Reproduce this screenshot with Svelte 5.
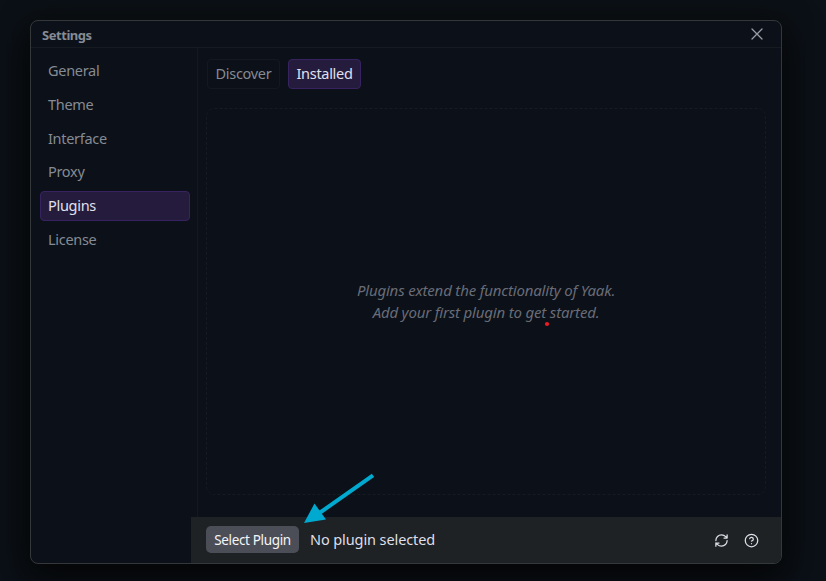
<script>
  const sections = ['General', 'Theme', 'Interface', 'Proxy', 'Plugins', 'License'];
  const tabs = ['Discover', 'Installed'];
  let section = $state('Plugins');
  let tab = $state('Installed');
</script>

<main>
  <div class="dialog">
    <header>
      <h1>Settings</h1>
      <button class="close" aria-label="Close">
        <svg width="12" height="12" viewBox="0 0 12 12"><path d="M1 1l10 10M11 1L1 11" /></svg>
      </button>
    </header>
    <div class="body">
      <nav>
        {#each sections as item}
          <button class:active={section === item} onclick={() => (section = item)}><span>{item}</span></button>
        {/each}
      </nav>
      <section>
        <div class="tabs">
          {#each tabs as item}
            <button class:active={tab === item} onclick={() => (tab = item)}><span>{item}</span></button>
          {/each}
        </div>
        <div class="empty">
          <svg class="dash" width="560" height="387"><rect x=".5" y=".5" width="559" height="386" rx="8" /></svg>
          <p>Plugins extend the functionality of Yaak.</p>
          <p>Add your first plugin to get started.</p>
        </div>
      </section>
    </div>
    <footer>
      <button class="select">Select Plugin</button>
      <span class="status">No plugin selected</span>
      <div class="icons">
        <svg width="15" height="15" viewBox="0 0 24 24">
          <path d="M3 12a9 9 0 0 1 9-9 9.75 9.75 0 0 1 6.74 2.74L21 8M21 3v5h-5M21 12a9 9 0 0 1-9 9 9.75 9.75 0 0 1-6.74-2.74L3 16M8 16H3v5" />
        </svg>
        <svg width="15" height="15" viewBox="0 0 24 24">
          <circle cx="12" cy="12" r="10" />
          <path d="M9.09 9a3 3 0 0 1 5.83 1c0 2-3 3-3 3M12 17h.01" />
        </svg>
      </div>
    </footer>
  </div>
  <svg class="marks" width="826" height="581" viewBox="0 0 826 581">
    <path d="M373 475.3L318 514" stroke="#00a9cf" stroke-width="4" />
    <path d="M304 523L314.5 503.5L326 519.5Z" fill="#00a9cf" />
    <circle cx="547" cy="324" r="2.1" fill="#ed1c24" />
  </svg>
</main>

<style>
  :global(body) {
    background: #0c1118;
  }
  main {
    position: relative;
    box-sizing: border-box;
    width: 826px;
    height: 581px;
    padding: 20px 0 0 30px;
    overflow: hidden;
    background: #0c1118;
    font-family: "Noto Sans", "Open Sans", sans-serif;
    font-size: 14.5px;
    letter-spacing: -0.3px;
    color: #858b94;
  }
  .dialog {
    box-sizing: border-box;
    display: flex;
    flex-direction: column;
    width: 752px;
    height: 544px;
    border: 1px solid #35383b;
    border-radius: 8px;
    background: #0c1018;
    overflow: hidden;
    box-shadow: 0 14px 36px 4px rgba(0, 0, 0, 0.65), 0 0 24px 4px rgba(12, 15, 16, 0.9);
  }
  button {
    box-sizing: border-box;
    margin: 0;
    padding: 0;
    border: 0;
    background: none;
    font: inherit;
    letter-spacing: inherit;
    color: inherit;
    white-space: nowrap;
  }
  header {
    box-sizing: border-box;
    display: flex;
    flex: none;
    align-items: center;
    justify-content: space-between;
    height: 27px;
    padding: 0 18px 0 11px;
    border-bottom: 1px solid #161b22;
  }
  h1 {
    margin: 2px 0 0;
    font-size: 13px;
    font-weight: 700;
    line-height: 18px;
    letter-spacing: -0.45px;
  }
  .close {
    display: flex;
  }
  svg {
    display: block;
    fill: none;
    stroke-linecap: round;
    stroke-linejoin: round;
  }
  .close svg {
    stroke: #989da9;
    stroke-width: 1.3;
  }
  .body {
    display: flex;
    flex: 1;
    min-height: 0;
  }
  nav {
    box-sizing: border-box;
    display: flex;
    flex-direction: column;
    gap: 3.8px;
    width: 167px;
    padding: 8px 7px 0 9px;
    border-right: 1px solid #141920;
  }
  nav button {
    flex: none;
    height: 30px;
    padding: 0 7px 2px;
    border: 1px solid transparent;
    border-radius: 4px;
    text-align: left;
    line-height: 26px;
  }
  button.active {
    border-color: #37235f;
    background: #241b3d;
    color: #e1e1ed;
  }
  section {
    flex: 1;
    padding: 11px 0 0 9px;
  }
  .tabs {
    display: flex;
    gap: 8px;
  }
  .tabs button {
    width: 73px;
    height: 30px;
    padding-bottom: 1px;
    border: 1px solid #141920;
    border-radius: 4px;
    line-height: 27px;
  }
  .tabs button.active {
    border-color: #37235f;
  }
  .empty {
    position: relative;
    box-sizing: border-box;
    display: flex;
    flex-direction: column;
    align-items: center;
    justify-content: center;
    width: 560px;
    height: 387px;
    margin: 19px 0 0 -1px;
    padding-bottom: 2px;
    font-size: 15px;
    font-style: italic;
    letter-spacing: -0.18px;
    line-height: 22px;
    color: #686c77;
  }
  .dash {
    position: absolute;
    inset: 0;
    stroke: #161b22;
    stroke-dasharray: 3 2;
    stroke-linecap: butt;
  }
  p {
    margin: 0;
    white-space: nowrap;
  }
  footer {
    box-sizing: border-box;
    display: flex;
    flex: none;
    align-items: center;
    height: 46px;
    margin-left: 160px;
    padding: 0 22px 0 15px;
    background: #1e2225;
  }
  .select {
    width: 93px;
    height: 27px;
    margin-bottom: 2px;
    padding-top: 2px;
    border-radius: 5px;
    background: #4c4e57;
    color: #f5f5f7;
    font-size: 13.5px;
    letter-spacing: -0.35px;
  }
  .status {
    margin: -3px 0 0 11px;
    color: #dedfe7;
    letter-spacing: -0.1px;
    white-space: nowrap;
  }
  .icons {
    display: flex;
    align-items: center;
    gap: 15px;
    margin-left: auto;
    stroke: #dedfe7;
    stroke-width: 2;
  }
  .marks {
    position: absolute;
    inset: 0;
    pointer-events: none;
    stroke-linecap: butt;
  }
</style>
